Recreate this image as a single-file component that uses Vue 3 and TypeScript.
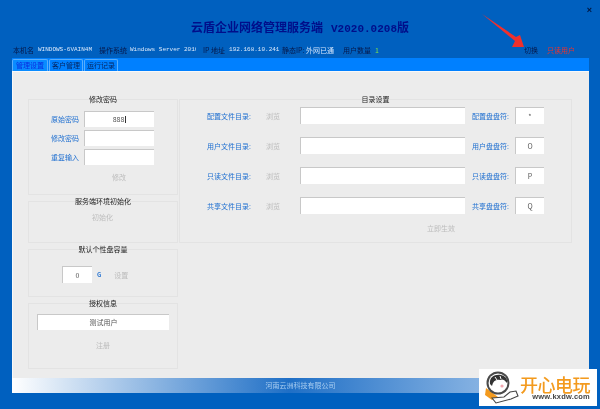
<template>
  <div class="window">
    <button type="button" class="close">×</button>
    <h1 class="title">云盾企业网络管理服务端<span class="version">V2020.0208</span>版</h1>

    <div class="info">
      <span>本机名</span>
      <span class="mono host">WINDOWS-6VAIN4M</span>
      <span class="os-label">操作系统</span>
      <span class="mono os">Windows Server 2016</span>
      <span class="ip-label">IP 地址</span>
      <span class="mono ip">192.168.10.241</span>
      <span class="static-label">静态IP:</span>
      <span class="online">外网已通</span>
      <span class="count-label">用户数量</span>
      <span class="count">1</span>
      <span class="switch">切换</span>
      <span class="readonly">只读用户</span>
    </div>

    <div class="tabs">
      <span
        v-for="(tab, i) in tabs"
        :key="tab"
        class="tab"
        :class="{ 'tab--active': i === 0 }"
      >{{ tab }}</span>
    </div>

    <main class="panel">
      <div class="columns">
        <div class="left">
          <section class="group group--password">
            <h2>修改密码</h2>
            <div class="pw-row"><label>原始密码</label><div class="input pw-input caret">888</div></div>
            <div class="pw-row"><label>修改密码</label><div class="input pw-input"></div></div>
            <div class="pw-row"><label>重复输入</label><div class="input pw-input"></div></div>
            <span class="action pw-action">修改</span>
          </section>

          <section class="group group--init">
            <h2>服务端环境初始化</h2>
            <span class="action init-action">初始化</span>
          </section>

          <section class="group group--quota">
            <h2>默认个性盘容量</h2>
            <div class="quota-row">
              <div class="input quota-input">0</div>
              <span class="unit">G</span>
              <span class="action">设置</span>
            </div>
          </section>

          <section class="group group--license">
            <h2>授权信息</h2>
            <div class="input license-input">测试用户</div>
            <span class="action license-action">注册</span>
          </section>
        </div>

        <section class="group group--dirs">
          <h2>目录设置</h2>
          <div v-for="row in dirRows" :key="row.dir" class="dir-row">
            <label class="dir-label">{{ row.dir }}:</label>
            <span class="action browse">浏览</span>
            <div class="input dir-input"></div>
            <label class="drive-label">{{ row.drive }}:</label>
            <div class="input drive-input">{{ row.letter }}</div>
          </div>
          <span class="action apply">立即生效</span>
        </section>
      </div>
    </main>

    <footer class="footer">河南云洲科技有限公司</footer>

    <svg class="arrow" width="44" height="36" viewBox="0 0 44 36">
      <path d="M0 0 L34 23 L38 21 L42 33 L30 33 L33 27 Z" fill="#f0302c" />
    </svg>

    <div class="watermark">
      <svg class="mascot" width="36" height="33" viewBox="0 0 36 33">
        <path d="M2 17 L1 24 L8 29 L14 26 Z" fill="#f39a1e" />
        <circle cx="14" cy="12" r="11.5" fill="#4a4a4a" />
        <circle cx="14" cy="12" r="9.5" fill="#fff" />
        <path d="M6 13 C5 6 11 3 17 4 C21 5 24 8 23 12 C20 8 18 8 16 9 C12 8 9 10 8 15 Z" fill="#333" />
        <path d="M11 6 L13 9 M16 5 L17 8" stroke="#fff" stroke-width="1" />
        <circle cx="18" cy="15" r="1.6" fill="#f2a7b0" />
        <path d="M8 27 L20 26 L26 21 L32 20 L34 25 L27 28 L12 32 Z" fill="#fff" stroke="#444" stroke-width="1.1" />
      </svg>
      <div class="wm-text">
        <strong>开心电玩</strong>
        <span>www.kxdw.com</span>
      </div>
    </div>
  </div>
</template>

<script setup lang="ts">
const tabs: string[] = ['管理设置', '客户管理', '运行记录']

const dirRows = [
  { dir: '配置文件目录', drive: '配置盘盘符', letter: '*' },
  { dir: '用户文件目录', drive: '用户盘盘符', letter: 'O' },
  { dir: '只读文件目录', drive: '只读盘盘符', letter: 'P' },
  { dir: '共享文件目录', drive: '共享盘盘符', letter: 'Q' },
]
</script>

<style>
html,
body {
  margin: 0;
  background: #0060bf;
}
</style>

<style scoped>
.window {
  position: relative;
  width: 600px;
  height: 409px;
  overflow: hidden;
  box-sizing: border-box;
  padding-top: 20px;
  background: #0060bf;
  font-family: "Noto Sans CJK SC", "Liberation Sans", sans-serif;
  font-size: 7px;
  line-height: 10px;
  color: #222;
  filter: blur(0.3px);
}

.close {
  position: absolute;
  top: 5px;
  right: 8px;
  padding: 0;
  border: none;
  background: none;
  font: 700 9px/10px "Liberation Sans", sans-serif;
  color: #00143c;
}

.title {
  margin: 0 0 0 191px;
  height: 13px;
  font-size: 12px;
  line-height: 13px;
  font-weight: 700;
  color: #000e8a;
  white-space: nowrap;
}

.version {
  margin-left: 8px;
  font-family: "Liberation Mono", monospace;
  font-size: 11px;
}

.info {
  display: flex;
  align-items: center;
  height: 10px;
  margin-top: 12px;
  padding-left: 13px;
  color: #06184a;
  white-space: nowrap;
}

.mono {
  font-family: "Liberation Mono", monospace;
  font-size: 6px;
  color: #dbe9fb;
}

.host { margin-left: 4px; width: 57px; }
.os-label { margin-left: 4px; }
.os { margin-left: 3px; width: 66px; overflow: hidden; }
.ip-label { margin-left: 7px; }
.ip { margin-left: 4px; width: 49px; }
.static-label { margin-left: 4px; width: 24px; }
.online { color: #cfe3fb; }
.count-label { margin-left: 9px; }
.count { margin-left: 4px; color: #7be04a; }
.switch { margin-left: 145px; }
.readonly { margin-left: 9px; color: #e8342f; }

.tabs {
  display: flex;
  align-items: flex-end;
  gap: 1px;
  height: 13px;
  margin: 3px 11px 0 12px;
  background: #0080ff;
}

.tab {
  box-sizing: border-box;
  height: 12px;
  padding: 0 2px;
  line-height: 11px;
  border: 1px solid #5aaefc;
  border-bottom: none;
  border-radius: 2px 2px 0 0;
  color: #06245e;
}

.tab--active {
  padding: 0 3px;
  background: #0a8cff;
  color: #0a2ce0;
}

.panel {
  box-sizing: border-box;
  height: 307px;
  margin: 0 11px 0 12px;
  padding: 27px 17px 0 15px;
  background: #ececec;
  border-top: 1px solid #f8f8f8;
  border-left: 1px solid #f8f8f8;
}

.columns {
  display: flex;
  gap: 1px;
  align-items: flex-start;
}

.left {
  display: flex;
  flex-direction: column;
  gap: 6px;
  width: 150px;
  flex-shrink: 0;
}

.group {
  position: relative;
  box-sizing: border-box;
  border: 1px solid #e3e3e3;
}

.group h2 {
  position: absolute;
  top: -5px;
  left: 0;
  right: 0;
  margin: 0;
  text-align: center;
  font-size: 7px;
  line-height: 9px;
  font-weight: 400;
  color: #222;
}

.group--password {
  height: 96px;
  padding-top: 11px;
  display: flex;
  flex-direction: column;
  gap: 3px;
}

.group--init {
  height: 42px;
  padding-top: 9px;
  text-align: center;
}

.group--quota {
  height: 48px;
  padding-top: 16px;
}

.group--license {
  height: 66px;
  padding-top: 10px;
  display: flex;
  flex-direction: column;
  align-items: center;
}

.group--dirs {
  width: 394px;
  height: 144px;
  padding-top: 7px;
  display: flex;
  flex-direction: column;
  gap: 13px;
}

.input {
  box-sizing: border-box;
  background: #fff;
  border-top: 1px solid #c8c8c8;
  border-left: 1px solid #c8c8c8;
  text-align: center;
  color: #555;
}

.pw-row {
  display: flex;
  align-items: center;
  gap: 5px;
  padding-left: 22px;
}

.pw-row label,
.dir-label,
.drive-label {
  color: #1f6fd0;
}

.pw-input {
  width: 70px;
  height: 16px;
  line-height: 15px;
}

.caret::after {
  content: "";
  display: inline-block;
  width: 1px;
  height: 7px;
  margin-left: 1px;
  vertical-align: -1px;
  background: #333;
}

.action {
  color: #bcbcbc;
}

.pw-action {
  margin-top: 4px;
  text-align: center;
  padding-left: 32px;
}

.init-action {
  display: block;
  margin-top: 1px;
  margin-right: 1px;
}

.quota-row {
  display: flex;
  align-items: center;
  padding-left: 33px;
}

.quota-input {
  width: 30px;
  height: 17px;
  line-height: 16px;
}

.unit {
  margin-left: 5px;
  font-size: 6px;
  font-weight: 700;
  color: #1f6fd0;
}

.quota-row .action {
  margin-left: 13px;
}

.license-input {
  width: 132px;
  height: 16px;
  line-height: 15px;
}

.license-action {
  margin-top: 10px;
}

.dir-row {
  display: flex;
  align-items: center;
  height: 17px;
  padding-left: 27px;
}

.dir-label {
  width: 44px;
}

.browse {
  margin-left: 15px;
  width: 14px;
}

.dir-input {
  margin-left: 20px;
  width: 165px;
  height: 17px;
}

.drive-label {
  margin-left: 7px;
  width: 38px;
}

.drive-input {
  margin-left: 5px;
  width: 29px;
  height: 17px;
  line-height: 16px;
}

.apply {
  align-self: flex-start;
  margin: -4px 0 0 247px;
}

.footer {
  box-sizing: border-box;
  height: 15px;
  margin: 0 11px 0 12px;
  line-height: 14px;
  text-align: center;
  color: #a9cdf0;
  background: linear-gradient(90deg, #fff 0%, #1f6fc6 48%, #c0d8f2 100%);
}

.arrow {
  position: absolute;
  top: 14px;
  left: 482px;
}

.watermark {
  position: absolute;
  left: 479px;
  top: 369px;
  display: flex;
  align-items: center;
  box-sizing: border-box;
  width: 118px;
  height: 37px;
  padding-left: 5px;
  background: #fff;
}

.wm-text {
  display: flex;
  flex-direction: column;
  align-items: flex-end;
  padding-top: 1px;
  font-family: "Liberation Sans", sans-serif;
}

.wm-text strong {
  font-family: "Noto Sans CJK SC", sans-serif;
  font-size: 18px;
  line-height: 17px;
  font-weight: 500;
  color: #f39a1e;
  letter-spacing: -0.5px;
}

.wm-text span {
  font-size: 7.5px;
  line-height: 8px;
  font-weight: 700;
  color: #444;
  letter-spacing: 0.2px;
}
</style>
